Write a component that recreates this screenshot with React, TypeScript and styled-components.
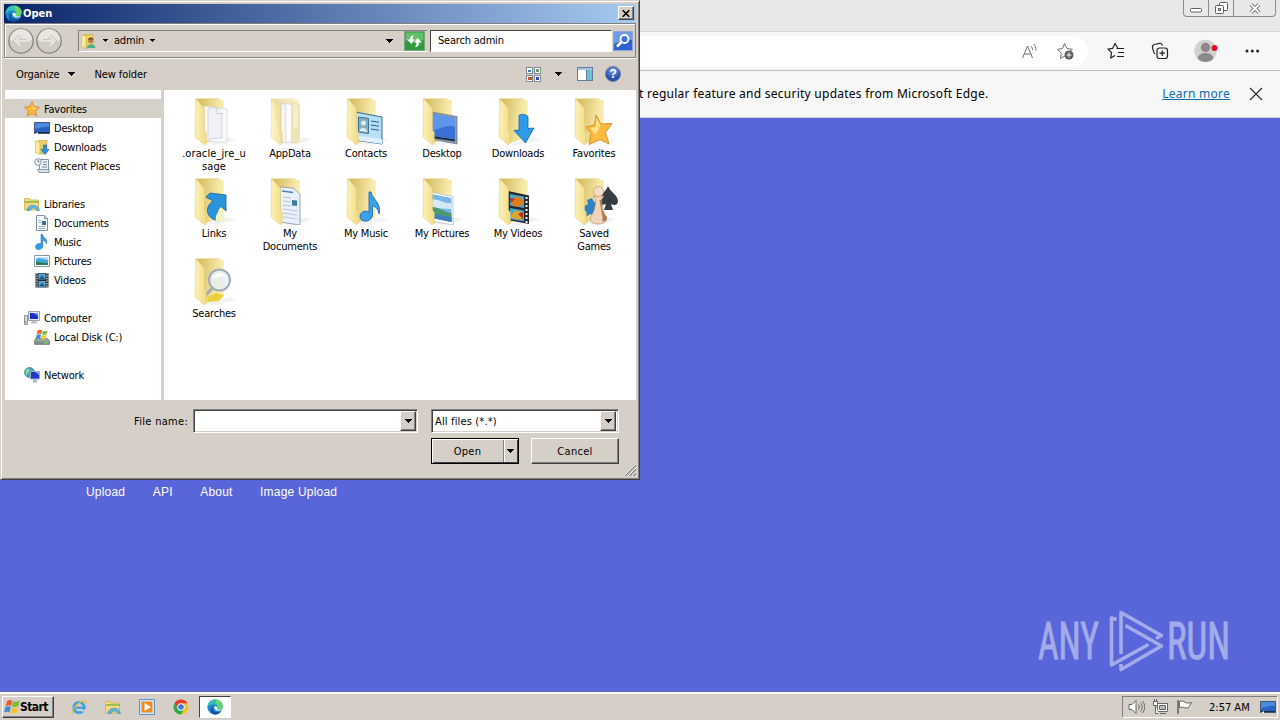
import type { ReactNode } from 'react';
import styled, { createGlobalStyle } from 'styled-components';

const GlobalStyle = createGlobalStyle`
  * {
    box-sizing: border-box;
  }

  body {
    margin: 0;
    overflow: hidden;
    font-family: 'DejaVu Sans Condensed', 'DejaVu Sans', sans-serif;
    font-stretch: condensed;
    font-size: 11px;
    letter-spacing: -0.2px;
    color: #000;
  }

  svg {
    display: block;
    flex: none;
  }
`;

/* ---------- desktop and browser ---------- */

const Screen = styled.div`
  position: relative;
  display: flex;
  flex-direction: column;
  width: 1280px;
  height: 720px;
  overflow: hidden;
  background: #5966da;
`;

const TabStrip = styled.div`
  display: flex;
  justify-content: flex-end;
  height: 32px;
  padding-right: 4px;
  background: #e8e8e8;
  border-bottom: 1px solid #d6d6d6;
`;

const WindowButtons = styled.div`
  display: flex;
  height: 17px;
  border: 1px solid #8c8c8c;
  border-top: 0;
  border-radius: 0 0 4px 4px;
`;

const WindowButton = styled.div<{ $width: number }>`
  display: flex;
  align-items: center;
  justify-content: center;
  width: ${({ $width }) => $width}px;

  & + & {
    border-left: 1px solid #8c8c8c;
  }
`;

const BrowserBar = styled.div`
  display: flex;
  align-items: center;
  height: 39px;
  padding-right: 20px;
  background: #f7f7f7;
  border-bottom: 1px solid #bdbdbd;
`;

const Omnibox = styled.div`
  display: flex;
  align-items: center;
  justify-content: flex-end;
  gap: 18px;
  width: 1088px;
  height: 31px;
  padding-right: 14px;
  background: #fff;
  border-radius: 16px;
`;

const BrowserActions = styled.div`
  display: flex;
  flex: 1;
  align-items: center;
  justify-content: space-between;
  padding-left: 19px;
`;

const InfoBar = styled.div`
  display: flex;
  align-items: center;
  height: 47px;
  padding: 0 16px 0 639px;
  background: #f7f7f7;
  border-bottom: 1px solid #cfd0dc;
  font-family: 'Noto Sans', sans-serif;
  font-stretch: normal;
  font-size: 12px;
  letter-spacing: 0.25px;
`;

const InfoText = styled.span`
  flex: 1;
  padding-bottom: 2px;
  white-space: nowrap;
`;

const LearnMore = styled.span`
  margin-right: 18px;
  padding-bottom: 2px;
  color: #0f6cb4;
  text-decoration: underline;
`;

const WebPage = styled.div`
  display: flex;
  flex: 1;
  flex-direction: column;
  justify-content: space-between;
  padding: 366px 48px 21px 86px;
`;

const PageNav = styled.nav`
  display: flex;
  gap: 27.500px;
  color: #fff;
  font: 12px/16px 'Liberation Sans', sans-serif;
  letter-spacing: 0.2px;
`;

const Watermark = styled.svg`
  align-self: flex-end;
  overflow: visible;
`;

/* ---------- taskbar ---------- */

const Taskbar = styled.div`
  display: flex;
  align-items: center;
  height: 28px;
  padding: 0 2px;
  background: #d5cfc7;
  border-top: 2px solid #f8f6f3;
`;

const StartButton = styled.div`
  display: flex;
  align-items: center;
  width: 52px;
  height: 22px;
  padding-left: 1px;
  background: #d5cfc7;
  border: 1px solid;
  border-color: #fff #404040 #404040 #fff;
  box-shadow: inset -1px -1px #808080;
  font-size: 12px;
  font-weight: bold;
  letter-spacing: -0.6px;
`;

const QuickLaunch = styled.div`
  display: flex;
  flex: 1;
  align-items: center;
  gap: 18px;
  padding-left: 17px;
`;

const ActiveTask = styled.div`
  display: flex;
  align-items: center;
  justify-content: center;
  width: 32px;
  height: 22px;
  margin-left: -8px;
  background: #fff;
  border: 1px solid;
  border-color: #404040 #fff #fff #404040;
`;

const Tray = styled.div`
  display: flex;
  align-items: center;
  gap: 7px;
  width: 156px;
  height: 22px;
  padding: 0 1px 0 5px;
  border: 1px solid;
  border-color: #808080 #fff #fff #808080;
`;

const Clock = styled.span`
  flex: 1;
  padding-left: 9px;
  white-space: nowrap;
  letter-spacing: 0;
`;

/* ---------- file dialog ---------- */

const Dialog = styled.div`
  position: absolute;
  top: 0;
  left: 0;
  display: flex;
  flex-direction: column;
  width: 640px;
  height: 480px;
  padding: 2px;
  background: #d5cfc7;
  border: 1px solid;
  border-color: #d5cfc7 #404040 #404040 #d5cfc7;
  box-shadow: inset 1px 1px #fff, inset -1px -1px #808080;
`;

const TitleBar = styled.div`
  display: flex;
  align-items: center;
  height: 19px;
  margin: 1px 1px 0;
  padding: 0 2px 0 1px;
  background: linear-gradient(90deg, #0a246a, #a6caf0);
  color: #fff;
  font-weight: bold;
  letter-spacing: 0;
`;

const TitleText = styled.span`
  flex: 1;
  padding-left: 1px;
`;

const CloseButton = styled.div`
  display: flex;
  align-items: center;
  justify-content: center;
  width: 16px;
  height: 14px;
  margin-bottom: 1px;
  background: #d5cfc7;
  border: 1px solid;
  border-color: #fff #404040 #404040 #fff;
  box-shadow: inset -1px -1px #808080;
`;

const Rebar = styled.div`
  display: flex;
  align-items: center;
  height: 35px;
  margin: 0 1px;
  padding-left: 2px;
  border: 1px solid #808080;
  box-shadow: inset 1px 1px #fff, 0 1px #fff;
`;

const AddressBar = styled.div`
  display: flex;
  align-items: center;
  width: 350px;
  height: 22px;
  margin-left: 15px;
  padding: 0 2px 0 1px;
  border: 1px solid;
  border-color: #808080 #d5cfc7 #fff #808080;
`;

const Crumb = styled.span`
  margin: 0 6px;
`;

const Spacer = styled.div<{ $width?: number }>`
  flex: ${({ $width }) => ($width ? `0 0 ${$width}px` : '1')};
`;

const SearchBox = styled.div`
  display: flex;
  align-items: center;
  width: 182px;
  height: 22px;
  margin: 0 1px 0 2px;
  padding-left: 7px;
  background: #fff;
  border: 1px solid #404040;
  border-right-color: #fff;
  border-bottom-color: #fff;
`;

const CommandBar = styled.div`
  display: flex;
  align-items: center;
  height: 32px;
  padding: 0 16px 0 13px;
`;

const Command = styled.span`
  margin-right: 8px;
  letter-spacing: -0.1px;
`;

const Body = styled.div`
  display: flex;
  height: 310px;
  margin: 0 1px 0 2px;
`;

const NavPane = styled.div`
  display: flex;
  flex-direction: column;
  gap: 19px;
  width: 156px;
  padding-top: 9px;
  background: #fff;
`;

const NavRow = styled.div<{ $child?: boolean; $selected?: boolean }>`
  display: flex;
  align-items: center;
  gap: 4px;
  height: 19px;
  padding-left: ${({ $child }) => ($child ? 29 : 19)}px;
  background: ${({ $selected }) => ($selected ? '#d5d0c8' : 'transparent')};
  white-space: nowrap;
`;

const NavLabel = styled.span`
  padding-top: 2px;
`;

const FileArea = styled.div`
  display: grid;
  flex: 1;
  grid-template-columns: repeat(6, 76px);
  grid-auto-rows: 80px;
  align-content: start;
  margin-left: 3px;
  padding: 7px 0 0 12px;
  background: #fff;
`;

const FileItem = styled.div`
  display: flex;
  flex-direction: column;
  align-items: center;
  line-height: 13px;
  text-align: center;
  white-space: pre-line;
`;

const FileLabel = styled.span<{ $loose?: boolean }>`
  margin-top: 2px;
  letter-spacing: ${({ $loose }) => ($loose ? '0.1px' : 'inherit')};
`;

const Footer = styled.div`
  display: flex;
  flex: 1;
  flex-direction: column;
  gap: 5px;
  padding: 9px 18px 0 130px;
`;

const FooterRow = styled.div`
  display: flex;
  align-items: center;
  justify-content: flex-end;
`;

const FieldLabel = styled.span`
  flex: 1;
  padding-left: 1px;
  white-space: nowrap;
  letter-spacing: 0.3px;
`;

const Combo = styled.div<{ $width: number }>`
  display: flex;
  align-items: center;
  justify-content: space-between;
  width: ${({ $width }) => $width}px;
  height: 24px;
  padding: 1px 1px 1px 3px;
  background: #fff;
  border: 1px solid;
  border-color: #808080 #fff #fff #808080;
  box-shadow: inset 1px 1px #404040, inset -1px -1px #d5cfc7;
  letter-spacing: 0.15px;

  & + & {
    margin-left: 13px;
    padding-right: 2px;
  }
`;

const ComboArrow = styled.div`
  display: flex;
  align-items: center;
  justify-content: center;
  width: 16px;
  height: 20px;
  background: #d5cfc7;
  border: 1px solid;
  border-color: #fff #404040 #404040 #fff;
  box-shadow: inset -1px -1px #808080;
`;

const Button = styled.div<{ $primary?: boolean }>`
  display: flex;
  align-items: center;
  width: 88px;
  height: 26px;
  border: 1px solid;
  border-color: ${({ $primary }) => ($primary ? '#000' : '#fff #404040 #404040 #fff')};
  box-shadow: ${({ $primary }) =>
    $primary ? 'inset 1px 1px #fff, inset -1px -1px #404040' : 'inset -1px -1px #808080'};
  letter-spacing: 0.3px;

  & + & {
    margin-left: 12px;
  }
`;

const ButtonText = styled.span`
  flex: 1;
  text-align: center;
`;

const SplitArrow = styled.div`
  display: flex;
  align-items: center;
  justify-content: center;
  width: 14px;
  height: 22px;
  margin-right: 1px;
  border-left: 1px solid #808080;
  box-shadow: inset 1px 0 #fff;
`;

const Grip = styled.svg`
  position: absolute;
  right: 3px;
  bottom: 3px;
`;

/* ---------- small icons ---------- */

interface IconProps {
  size?: number;
  children: ReactNode;
}

const Icon = ({ size = 16, children }: IconProps) => (
  <svg width={size} height={size} viewBox="0 0 16 16" fill="none">
    {children}
  </svg>
);

const Arrow = () => (
  <svg width="7" height="4" viewBox="0 0 7 4" shapeRendering="crispEdges">
    <path d="M0 0h7v1H0zM1 1h5v1H1zM2 2h3v1H2zM3 3h1v1H3z" fill="#000" />
  </svg>
);

const CrumbArrow = () => (
  <svg width="5" height="3" viewBox="0 0 5 3" shapeRendering="crispEdges">
    <path d="M0 0h5v1H0zM1 1h3v1H1zM2 2h1v1H2z" fill="#000" />
  </svg>
);

const EdgeIcon = ({ size = 16 }: { size?: number }) => (
  <Icon size={size}>
    <circle cx="8" cy="8" r="7.6" fill="#1c86d1" />
    <path d="M.5 8C.8 3.500 4 .4 8 .4c4.500 0 7.600 3.200 7.600 6.500 0 2.500-1.900 4-4 4-1.800 0-2.300-.8-1.700-1.500 1.200-1.600 0-4.200-3.100-4.200C4 5.200 1.300 6.600.5 8z" fill="#35c1b4" />
    <path d="M9 .5c4 .3 6.600 3.200 6.600 6.400 0 2.500-1.900 4-4 4-1.800 0-2.300-.8-1.700-1.500C11.500 6 8 3.600 9 .5z" fill="#66d66a" />
    <path d="M5.600 9.200c-.3 3.400 3.500 5.400 8.200 3.300C12 15 9.800 15.700 7.500 15.600 3 15 2.500 9 6.600 6.800 5.900 7.500 5.600 8.300 5.600 9.200z" fill="#124f9c" />
    <path d="M7.300 7.200c-.6 3 1.700 5 6.600 4.400l1.300-1.500c-1 .8-4.700 1.400-5.400 0 .8-1.300.4-3-2.500-2.900z" fill="#fff" />
  </Icon>
);

const FlagIcon = () => (
  <Icon>
    <path d="M3 2.200C5 .6 6.500.7 8.300 1.800L7.100 7C5.300 6 3.600 6.200 1.600 7.300z" fill="#f0592a" />
    <path d="M9.100 2.200c2 1 4 .9 6.700-.4l-1.400 5.300c-2.200 1.200-4.300 1.300-6.500.3z" fill="#7fba35" />
    <path d="M1.300 8.200c2-1.200 3.700-1.200 5.500-.2l-1.300 5.300C3.700 12.300 2 12.500 0 13.500z" fill="#3b8ede" />
    <path d="M7.600 8.400c2 1 4.200.9 6.500-.2l-1.400 5.400c-2.200 1.200-4.200 1.200-6.400.1z" fill="#fbc02d" />
  </Icon>
);

const StarIcon = () => (
  <Icon>
    <path d="M8 .7l2.200 4.800 5.300.7-3.900 3.600 1 5.400L8 12.600l-4.700 2.600 1-5.400L.5 6.200l5.300-.7z" fill="#fdb83c" stroke="#d9822a" strokeWidth=".8" />
    <path d="M8 2.500l1.400 4 3.600.5-4 1.500z" fill="#ffe08a" />
  </Icon>
);

const MonitorIcon = () => (
  <Icon>
    <path d="M.5 2.500h15v11H.5z" fill="#2a62c0" stroke="#41586f" />
    <path d="M1 3h14v4C9 6 5 9 1 9z" fill="#4b8ae0" />
    <path d="M1 12.500h14" stroke="#1a2b4a" />
    <path d="M1 14l3-2v2z" fill="#fff" />
  </Icon>
);

const SmallFolder = () => (
  <>
    <path d="M4 1.500h9v12l-6 2z" fill="#e8cf6c" stroke="#c9a63c" strokeWidth=".6" />
    <path d="M1.500 1.500L6 3.500v12l-4.500-2z" fill="#fbeb9b" stroke="#d4b44c" strokeWidth=".6" />
  </>
);

const DownloadsIcon = () => (
  <Icon>
    <SmallFolder />
    <path d="M9.500 6h3v4.500H15l-4 5-4-5h2.500z" fill="#2b94e3" stroke="#155fa5" strokeWidth=".6" />
  </Icon>
);

const UserFolderIcon = () => (
  <Icon>
    <SmallFolder />
    <path d="M7 15c0-5 8-5 8.500 0z" fill="#4fae8e" />
    <circle cx="10.800" cy="7.500" r="2.600" fill="#b9794b" />
    <path d="M8.200 7c0-3.500 5-3.500 5.200 0-1.500-1-3.500-1-5.200 0z" fill="#6b3d1e" />
  </Icon>
);

const RecentIcon = () => (
  <Icon>
    <path d="M5.500 1.500h9v10h-9z" fill="#eef4f8" stroke="#8296a5" />
    <path d="M3.500 11.500h11.500v3H5z" fill="#dbe5ec" stroke="#8296a5" />
    <path d="M9 4h4M9 6.500h4M8 9h5" stroke="#6e8698" />
    <circle cx="4" cy="4" r="3.300" fill="#f3f6f8" stroke="#8296a5" />
    <path d="M4 2v2h1.500" stroke="#4a5e6e" strokeWidth=".8" />
  </Icon>
);

const LibraryIcon = () => (
  <Icon>
    <path d="M.5 2.500h5l1 1.500h8v10H.5z" fill="#f3dc83" stroke="#cfae4b" strokeWidth=".8" />
    <path d="M1 6h14" stroke="#7fb842" strokeWidth="1.500" />
    <path d="M3 14.500c0-6 11-8 12.500 0h-2.800c-1-3.500-5.500-3.500-6.500 0z" fill="#5fb8dd" stroke="#3b8db8" strokeWidth=".6" />
  </Icon>
);

const DocumentIcon = () => (
  <Icon>
    <path d="M2.500.5h8l3 3v12h-11z" fill="#fff" stroke="#7d93aa" />
    <path d="M10.500.5v3h3" fill="#d7e3ef" stroke="#7d93aa" />
    <path d="M4.500 5.500h3M4.500 7.500h3M4.500 11.500h7M4.500 13.500h7" stroke="#9aaec2" />
    <path d="M8 6h4v4H8z" fill="#3b6ea8" />
  </Icon>
);

const MusicIcon = () => (
  <Icon>
    <path d="M7 .5h1.500c.5 3.500 6 4.500 3.800 9.500-.3-2.500-2-3.500-3.500-3.700v6.200c-.8 4-7.300 4-7.300.4 0-2.900 3-3.900 5.500-2.900z" fill="#2fa0e8" stroke="#1668a8" strokeWidth=".5" />
  </Icon>
);

const PictureIcon = () => (
  <Icon>
    <path d="M.5 2.500h15v11H.5z" fill="#fff" stroke="#8a97a3" />
    <path d="M2 4h12v8H2z" fill="#3fa9e0" />
    <path d="M2 6c4-2 8 0 12 1v-3H2z" fill="#b6e3f7" />
    <path d="M2 12V9c3-1 5 1 12 1v2z" fill="#2b7d5d" />
  </Icon>
);

const VideoIcon = () => (
  <Icon>
    <path d="M1.500 1h13v14.500h-13z" fill="#252b33" />
    <path d="M4.500 1.500h7v6h-7zM4.500 9h7v6h-7z" fill="#4fa9d3" />
    <path d="M5 7l3-4 3 4zM5 14.500l3-4 3 4z" fill="#1b5b8a" />
    <path d="M3 1v14.500M13 1v14.500" stroke="#e6e8ea" strokeWidth="1.300" strokeDasharray="1.300 1.200" />
  </Icon>
);

const ComputerIcon = () => (
  <Icon>
    <path d="M4.500 1.500h11v9h-11z" fill="#dfe5ec" stroke="#9aa5b3" />
    <path d="M6 3h8v6H6z" fill="#1b2fc4" />
    <path d="M9 3h5v3z" fill="#6d8af0" />
    <path d="M8 11h4l1.500 2.500h-7z" fill="#bcc5cf" />
    <path d="M.5 5.500h3v9h-3z" fill="#d9e0d2" stroke="#8b979f" />
    <path d="M1.500 11v2" stroke="#5eb83a" />
  </Icon>
);

const DiskIcon = () => (
  <Icon>
    <path d="M1.500 9.500h12l2 2.500v3.500H.5V12z" fill="#9aa6a0" stroke="#6c7972" strokeWidth=".7" />
    <path d="M1 12.500h14v2.500H1z" fill="#7f8f85" />
    <path d="M10 13.700h4" stroke="#6de04c" />
    <path d="M3.500 1.500c1.500-1 3-1 4.500 0L7.300 5c-1.500-.8-3-.7-4.500.2z" fill="#ee5a2b" />
    <path d="M8.700 1.800c1.500.8 3 .7 4.800-.3L12.700 5c-1.500 1-3 1-4.700.2z" fill="#7cbc3a" />
    <path d="M2.600 6c1.600-1 3-1 4.500-.2L6.300 9.500c-1.500-.8-3-.8-4.500.1z" fill="#3f8fdd" />
    <path d="M7.800 6c1.600.8 3 .8 4.700-.2l-.8 3.600c-1.600 1-3.200 1-4.700.2z" fill="#fbc531" />
  </Icon>
);

const NetworkIcon = () => (
  <Icon>
    <circle cx="5.500" cy="5.500" r="5" fill="#43a6c9" stroke="#27708f" strokeWidth=".6" />
    <path d="M3 2c3-1 3 1 2 2.500S3 6 2.500 8 .8 5 3 2z" fill="#8fdf9d" />
    <path d="M6.500 4.500h9v7.500h-9z" fill="#2136c8" stroke="#a4aebd" />
    <path d="M11 5h4v3z" fill="#7e98f2" />
    <path d="M9.500 12.500h3l1 3h-5z" fill="#a9b3bf" />
  </Icon>
);

const IeIcon = () => (
  <Icon>
    <circle cx="8" cy="8.500" r="5.200" stroke="#36a6e6" strokeWidth="2.800" />
    <path d="M3 8.700h11.500" stroke="#36a6e6" strokeWidth="2.200" />
    <path d="M9.500 10.500h6.500v2h-5.500z" fill="#d5cfc7" />
    <path d="M1.500 14.800c-3-3 8-14.300 13-12.800 1 .5.800 1.500.3 2.500" stroke="#efb93a" strokeWidth="1.300" />
  </Icon>
);

const WmpIcon = () => (
  <Icon>
    <path d="M.5.5h15v15H.5z" fill="#cfe6f8" stroke="#5d93c4" />
    <path d="M2.500 2.500h11v11h-11z" fill="#f28a1e" />
    <path d="M5.500 4v8L12 8z" fill="#fff" />
  </Icon>
);

const ChromeIcon = () => (
  <Icon>
    <circle cx="8" cy="8" r="7.500" fill="#fbc116" />
    <path d="M1.500 4.250A7.500 7.500 0 0 1 14.500 4.250L8 4.400 4.800 9.800z" fill="#e33b2e" />
    <path d="M1.500 4.250A7.500 7.500 0 0 0 8 15.500l3.200-5.600L4.800 9.800z" fill="#2da94f" />
    <circle cx="8" cy="8" r="3.700" fill="#fff" />
    <circle cx="8" cy="8" r="2.800" fill="#3b79e8" />
  </Icon>
);

const RoundButton = ({ back }: { back?: boolean }) => (
  <svg width="28" height="28" viewBox="0 0 28 28" fill="none">
    <circle cx="14" cy="14" r="12.200" fill="#cfcbc5" stroke="#85827d" strokeWidth="1.200" />
    <path d="M3 13a11 11 0 0 1 22 0c-6 3-16 3-22 0z" fill="#e9e6e2" />
    <g transform={back ? undefined : 'matrix(-1 0 0 1 28 0)'}>
      <path d="M20 14H9M13.500 9L8.500 14l5 5" stroke="#c2beb8" strokeWidth="4" />
      <path d="M20 14H9M13.500 9L8.500 14l5 5" stroke="#e6e3df" strokeWidth="2.600" />
    </g>
  </svg>
);

const RefreshIcon = () => (
  <svg width="21" height="20" viewBox="0 0 21 20" fill="none">
    <path d="M.5.5h20v19H.5z" fill="#2f9e3a" stroke="#7fa183" />
    <path d="M1.500 1.500h18V9c-6 2-12 2-18 0z" fill="#63c069" />
    <path d="M10 4.500c-3 0-4 1.500-4 4H3l4.500 4.500L11 8.500H8.700c0-1.500.3-2.500 1.300-4z" fill="#fff" />
    <path d="M11 16c3 0 4-1.500 4-4.500h3L13.500 7 10 11.500h2.300c0 1.500-.3 3-1.300 4.500z" fill="#fff" />
  </svg>
);

const SearchIcon = () => (
  <svg width="20" height="20" viewBox="0 0 20 20" fill="none">
    <path d="M.5.5h19v19H.5z" fill="#2f62d0" stroke="#8ea6d8" />
    <path d="M1 1h18v8C12 8 6 11 1 13z" fill="#6e9bea" />
    <circle cx="11.500" cy="8" r="4" fill="#3a74dc" stroke="#fff" strokeWidth="1.800" />
    <path d="M8.500 11L4 15.500" stroke="#fff" strokeWidth="2.600" />
  </svg>
);

const ViewsIcon = () => (
  <svg width="15" height="15" viewBox="0 0 15 15" fill="none" shapeRendering="crispEdges">
    <path d="M.5.5h6v6h-6zM8.500.5h6v6h-6zM.5 8.500h6v6h-6zM8.500 8.500h6v6h-6z" fill="#fff" stroke="#7f8b97" />
    <path d="M2 3h3v2H2z" fill="#3e7fa8" />
    <path d="M10 2h3v3h-3z" fill="#69a35e" />
    <path d="M2 10h4v3H2z" fill="#c3551f" />
    <path d="M10 10h3v3h-3z" fill="#2e4ea5" />
  </svg>
);

const PreviewIcon = () => (
  <svg width="16" height="14" viewBox="0 0 16 14" shapeRendering="crispEdges">
    <path d="M.5.5h15v13H.5z" fill="#fff" stroke="#5e7c9b" />
    <path d="M1 1h14v2H1z" fill="#aac4dd" />
    <path d="M10 3h5v10h-5z" fill="#6cc0d8" />
    <path d="M9.500 3v10" stroke="#5e7c9b" />
  </svg>
);

const HelpBadge = styled.div`
  display: flex;
  align-items: center;
  justify-content: center;
  width: 16px;
  height: 16px;
  background: radial-gradient(circle at 50% 25%, #7e9fe0, #2b4fae 65%);
  border: 1px solid #6377a5;
  border-radius: 50%;
  color: #fff;
  font: bold 12px/14px 'Liberation Sans', sans-serif;
`;

/* ---------- folder icons ---------- */

const Folder = ({ pale, children }: { pale?: boolean; children?: ReactNode }) => (
  <svg width="48" height="48" viewBox="0 0 48 48" fill="none">
    <defs>
      <linearGradient id="flap" x1="0" y1="0" x2="1" y2="0.100">
        <stop offset="0" stopColor="#fdf4ba" />
        <stop offset="1" stopColor="#f1dc88" />
      </linearGradient>
      <linearGradient id="back" x1="0" y1="0" x2="1" y2="0.200">
        <stop offset="0.200" stopColor="#d9c068" />
        <stop offset="1" stopColor="#fbf0b4" />
      </linearGradient>
    </defs>
    <path d="M15 47l24-7 7 3-20 5z" fill="#000" opacity=".05" />
    <g opacity={pale ? 0.55 : 1}>
      <path d="M5.500 1.800L28.500 1.500l1 1.500 3.500.5V40l-18 6z" fill="url(#back)" stroke="#e6d389" strokeWidth=".5" />
    </g>
    {children}
    <path
      d="M5.500 1.800L14.500 11v22l1.800 2.500V46l-1.800 2L5 40z"
      fill="url(#flap)"
      stroke="#dfc874"
      strokeWidth=".5"
      opacity={pale ? 0.75 : 1}
    />
  </svg>
);

interface FileEntry {
  name: string;
  pale?: boolean;
  loose?: boolean;
  art: ReactNode;
}

const files: FileEntry[] = [
  {
    name: '.oracle_jre_u\nsage',
    loose: true,
    art: (
      <>
        <path d="M14 9l23 3v34l-23-3z" fill="#fafafa" stroke="#cfd1d4" strokeWidth=".7" />
        <path d="M18 11h9l5 5v25l-14 1z" fill="#f0f1f4" stroke="#c5c7cc" strokeWidth=".7" />
        <path d="M27 11v5.500h5" fill="#fff" stroke="#b9bcc2" strokeWidth=".7" />
      </>
    ),
  },
  {
    name: 'AppData',
    pale: true,
    art: (
      <>
        <path d="M15 6l6 2v36l-6 2z" fill="#f4f4f2" stroke="#d2cfc2" strokeWidth=".7" />
        <path d="M20 6l6 2v36l-6 2z" fill="#fff" stroke="#cfcfcf" strokeWidth=".7" />
        <path d="M26 5l7 3v37l-7 1z" fill="#f7edc8" stroke="#d9cb95" strokeWidth=".7" />
        <path d="M24 33l10-4v15l-4 3z" fill="#efe3b4" />
      </>
    ),
  },
  {
    name: 'Contacts',
    art: (
      <>
        <path d="M13 15l27 5v27l-27-4z" fill="#b8def5" stroke="#326d9b" />
        <path d="M13 38l27 4v5l-27-4z" fill="#dbf0fb" />
        <path d="M16.500 20l10 1.500v15l-10-1.500z" fill="#7db0b9" stroke="#3f7295" />
        <circle cx="21.500" cy="26" r="2.500" fill="#dcecf5" />
        <path d="M17.500 34c1-5 7-4 8 1z" fill="#dcecf5" />
        <path d="M29 24l8 1.200M29 28l8 1.200M29 32l8 1.200" stroke="#29628f" />
      </>
    ),
  },
  {
    name: 'Desktop',
    art: (
      <>
        <path d="M13 15l26 4.500V47l-26-5z" fill="#8ea0b4" stroke="#5c6d80" strokeWidth=".7" />
        <path d="M14 17l23 4v21.500L14 39z" fill="#3a71d6" />
        <path d="M14 17l23 4v8.500C28 27 20 33 14 33z" fill="#5f95ea" />
        <path d="M14 39l23 3.500v2L14 41z" fill="#1c2c46" />
      </>
    ),
  },
  {
    name: 'Downloads',
    art: (
      <path d="M25 18.500c3-2 6-1.500 9 1v12l6-.5L31.500 46 20 33.500l5-.5z" fill="#2e9be8" stroke="#1765ab" strokeWidth=".8" />
    ),
  },
  {
    name: 'Favorites',
    art: (
      <>
        <path d="M26 18l5 9 11-.5-6.500 9L39 47l-9-4.500-11 5 2-11L16 30l8.500-2z" fill="#fcbb3f" stroke="#d48b22" strokeWidth=".9" />
        <path d="M26.500 21l4 7.500-5 9.500-5-7 5-1z" fill="#ffe08c" />
      </>
    ),
  },
  {
    name: 'Links',
    art: (
      <>
        <path d="M16 20l4-4 16 2v16l-5-4.500c-4 3-5 8-2 14.500-13-2-15-14-6-20z" fill="#2a94da" stroke="#10609f" strokeWidth=".8" />
        <path d="M26 44c-1-5 1-8 4-11l4.500 5v6z" fill="#eef2c6" />
      </>
    ),
  },
  {
    name: 'My\nDocuments',
    art: (
      <>
        <path d="M14 10l13 1 7 6v31l-20-3z" fill="#eaf0f9" stroke="#8592ab" strokeWidth=".8" />
        <path d="M16 14l11 1.500" stroke="#4c83b8" strokeWidth="1.500" />
        <path d="M17 20l8 1M17 24l8 1M17 28l8 1M17 32l14 2M17 36l14 2M17 40l14 2" stroke="#b3bfd2" strokeWidth=".9" />
        <path d="M26 23l5 .6v5.500l-5-.6z" fill="#3b7ea0" />
      </>
    ),
  },
  {
    name: 'My Music',
    art: (
      <path d="M27 15h2c1 7 11 11 8 22-.6-5-4-8-6.500-8v9c-1 8-12.500 8-12.500 1.500 0-4.500 5-6.500 9-4.500z" fill="#3ba1ee" stroke="#1666ae" strokeWidth=".9" />
    ),
  },
  {
    name: 'My Pictures',
    art: (
      <>
        <path d="M13 15l22 4.500V48l-22-4z" fill="#fff" stroke="#a5b1bb" strokeWidth=".7" />
        <path d="M14 17l19.500 4v24L14 41z" fill="#76b7e6" />
        <path d="M14 23c5-2 12 4 19.500 3v6L14 31z" fill="#d3eaf6" />
        <path d="M14 30c7 0 13 5 19.500 6v9L14 41z" fill="#4c9a72" />
        <path d="M14 37c6 0 13 3 19.500 3v5L14 41z" fill="#3f7ec0" />
      </>
    ),
  },
  {
    name: 'My Videos',
    art: (
      <>
        <path d="M14 14l21 4.500V47l-21-4z" fill="#22282e" />
        <path d="M16 17l14 2.500v11.500l-14-2.500zM16 31l14 2.500v11L16 42z" fill="#47a6cf" />
        <path d="M17 27c1-7 6-9 9-6 3 0 4 4 2 7s-8 2-11-1z" fill="#e07c1f" />
        <path d="M17 41c1-7 5-9 9-6 4 1 3 6 1 8z" fill="#dfa52a" />
        <path d="M16 21l5 1-4 4zM24 37l5-2v7z" fill="#b3302b" />
        <path d="M32.500 20v26" stroke="#f2f4f5" strokeWidth="2" strokeDasharray="2 2" />
      </>
    ),
  },
  {
    name: 'Saved\nGames',
    art: (
      <>
        <path d="M13 30l5-3-1-4 5-2 2 4 4-1v14l-4 2-3-3-8 4z" fill="#3181c5" />
        <path d="M38 9c2 6 10 9 10 15 0 4-4 5-7 3l2 6h-9l2-6c-4 2-7 0-7-3 0-6 7-9 9-15z" fill="#353c42" />
        <path d="M23 19h11l-2.500 3.500c0 7 2 13 5 17.500v4c-4 4-13 4-16 0v-4c4-5 5-11 5-17.500z" fill="#f0d3b8" stroke="#b98e6b" strokeWidth=".7" />
        <circle cx="28.500" cy="14.500" r="5" fill="#f5dcc4" stroke="#c29a79" strokeWidth=".7" />
        <path d="M29.500 23l3 17v5l4-2v-3c-4-4-5-9-5-17z" fill="#a87954" />
      </>
    ),
  },
  {
    name: 'Searches',
    art: (
      <>
        <path d="M18 40l8-4 8 2-5 6-11 1z" fill="#e9cf3e" />
        <path d="M22.500 31L13 41" stroke="#a5a9ad" strokeWidth="3" />
        <circle cx="29.500" cy="23" r="10.500" fill="#e6eff2" fillOpacity=".85" stroke="#a1adb5" strokeWidth="2" />
        <path d="M22 22c2-6 9-8 14-3-4 0-9 1-14 3z" fill="#fff" />
      </>
    ),
  },
];

interface NavEntry {
  label: string;
  icon: ReactNode;
}

const navGroups: NavEntry[][] = [
  [
    { label: 'Favorites', icon: <StarIcon /> },
    { label: 'Desktop', icon: <MonitorIcon /> },
    { label: 'Downloads', icon: <DownloadsIcon /> },
    { label: 'Recent Places', icon: <RecentIcon /> },
  ],
  [
    { label: 'Libraries', icon: <LibraryIcon /> },
    { label: 'Documents', icon: <DocumentIcon /> },
    { label: 'Music', icon: <MusicIcon /> },
    { label: 'Pictures', icon: <PictureIcon /> },
    { label: 'Videos', icon: <VideoIcon /> },
  ],
  [
    { label: 'Computer', icon: <ComputerIcon /> },
    { label: 'Local Disk (C:)', icon: <DiskIcon /> },
  ],
  [{ label: 'Network', icon: <NetworkIcon /> }],
];

const OpenDialog = () => (
  <Dialog>
    <TitleBar>
      <EdgeIcon size={17} />
      <TitleText>Open</TitleText>
      <CloseButton>
        <svg width="8" height="7" viewBox="0 0 8 7">
          <path d="M.7.300l6.600 6.400M7.300.300L.7 6.700" stroke="#000" strokeWidth="1.600" />
        </svg>
      </CloseButton>
    </TitleBar>
    <Rebar>
      <RoundButton back />
      <RoundButton />
      <AddressBar>
        <UserFolderIcon />
        <Spacer $width={7} />
        <CrumbArrow />
        <Crumb>admin</Crumb>
        <CrumbArrow />
        <Spacer />
        <Arrow />
        <Spacer $width={11} />
        <RefreshIcon />
      </AddressBar>
      <SearchBox>Search admin</SearchBox>
      <SearchIcon />
    </Rebar>
    <CommandBar>
      <Command>Organize</Command>
      <Arrow />
      <Spacer $width={20} />
      <Command>New folder</Command>
      <Spacer />
      <ViewsIcon />
      <Spacer $width={14} />
      <Arrow />
      <Spacer $width={15} />
      <PreviewIcon />
      <Spacer $width={12} />
      <HelpBadge>?</HelpBadge>
    </CommandBar>
    <Body>
      <NavPane>
        {navGroups.map((group, g) => (
          <div key={group[0].label}>
            {group.map((entry, i) => (
              <NavRow key={entry.label} $child={i > 0} $selected={g === 0 && i === 0}>
                {entry.icon}
                <NavLabel>{entry.label}</NavLabel>
              </NavRow>
            ))}
          </div>
        ))}
      </NavPane>
      <FileArea>
        {files.map((file) => (
          <FileItem key={file.name}>
            <Folder pale={file.pale}>{file.art}</Folder>
            <FileLabel $loose={file.loose}>{file.name}</FileLabel>
          </FileItem>
        ))}
      </FileArea>
    </Body>
    <Footer>
      <FooterRow>
        <FieldLabel>File name:</FieldLabel>
        <Combo $width={225}>
          <span />
          <ComboArrow>
            <Arrow />
          </ComboArrow>
        </Combo>
        <Combo $width={188}>
          All files (*.*)
          <ComboArrow>
            <Arrow />
          </ComboArrow>
        </Combo>
      </FooterRow>
      <FooterRow>
        <Button $primary>
          <ButtonText>Open</ButtonText>
          <SplitArrow>
            <Arrow />
          </SplitArrow>
        </Button>
        <Button>
          <ButtonText>Cancel</ButtonText>
        </Button>
      </FooterRow>
    </Footer>
    <Grip width="12" height="12" viewBox="0 0 12 12">
      <path d="M1 12L12 1M5 12l7-7M9 12l3-3" stroke="#808080" strokeWidth="1.400" />
      <path d="M0 12L12 0M4 12l8-8M8 12l4-4" stroke="#fff" strokeWidth=".7" />
    </Grip>
  </Dialog>
);

const App = () => (
  <Screen>
    <GlobalStyle />
    <TabStrip>
      <WindowButtons>
        <WindowButton $width={24}>
          <svg width="12" height="16" viewBox="0 0 12 16">
            <rect x=".5" y="8.500" width="11" height="3.500" rx="1" fill="#fff" stroke="#5f5f5f" />
          </svg>
        </WindowButton>
        <WindowButton $width={25}>
          <svg width="13" height="14" viewBox="0 0 13 14" fill="#fff" stroke="#5f5f5f">
            <rect x="4.500" y="1.500" width="8" height="8" rx="1" />
            <rect x=".5" y="4.500" width="8" height="8" rx="1" />
            <rect x="3.500" y="7.500" width="2" height="2" />
          </svg>
        </WindowButton>
        <WindowButton $width={42}>
          <svg width="12" height="11" viewBox="0 0 12 11" fill="none">
            <path d="M2 1.500l8 8M10 1.500l-8 8" stroke="#5f5f5f" strokeWidth="3.600" />
            <path d="M2 1.500l8 8M10 1.500l-8 8" stroke="#fff" strokeWidth="1.800" />
          </svg>
        </WindowButton>
      </WindowButtons>
    </TabStrip>
    <BrowserBar>
      <Omnibox>
        <svg width="17" height="17" viewBox="0 0 17 17" fill="none" stroke="#6f6f6f">
          <path d="M1.500 15L6.500 3l5 12M3.200 11h6.600" />
          <path d="M10 3c1 1 1.500 2.200 1.500 4M12.500 1c1.700 1.500 2.500 3.700 2.500 6.500" />
        </svg>
        <svg width="18" height="18" viewBox="0 0 18 18" fill="none">
          <path d="M9 14l-4.500 2.500.8-5.300L1.500 7.300l5-.8L8.500 1.500 11 6.500l5.300.8-2 2" stroke="#6f6f6f" strokeLinejoin="round" />
          <circle cx="13" cy="13" r="4.500" fill="#5f5f5f" />
          <path d="M13 10.500v5M10.500 13h5" stroke="#fff" />
        </svg>
      </Omnibox>
      <BrowserActions>
        <svg width="18" height="18" viewBox="0 0 18 18" fill="none" stroke="#222" strokeWidth="1.200">
          <path d="M11 6.500L8 1.500 5.700 6.300 1 7l3.500 3.700-.8 5.300 4.300-2.400" strokeLinejoin="round" />
          <path d="M9.500 6.500H17M11 10.500h6M10 14.500h7" />
        </svg>
        <svg width="18" height="18" viewBox="0 0 18 18" fill="none" stroke="#222" strokeWidth="1.200">
          <rect x="6" y="6" width="10.500" height="10.500" rx="2.500" />
          <path d="M11.200 8.500v5.500M8.500 11.200H14M4 12C2.500 11 2 8 1.500 5.500 1.200 3.500 2 2.800 3.500 2.500L8.500 1.300c1.700-.3 2.500.4 3 2.200" />
        </svg>
        <svg width="24" height="24" viewBox="0 0 24 24">
          <circle cx="11.500" cy="12" r="11.200" fill="#d3d1d0" />
          <circle cx="11.500" cy="8.500" r="4.700" fill="#8c8a89" />
          <ellipse cx="11.500" cy="18.500" rx="7.700" ry="4.400" fill="#8c8a89" />
          <circle cx="20.500" cy="9" r="3" fill="#dd1026" />
        </svg>
        <svg width="16" height="16" viewBox="0 0 16 16" fill="#222">
          <circle cx="3" cy="8" r="1.500" />
          <circle cx="8.300" cy="8" r="1.500" />
          <circle cx="13.600" cy="8" r="1.500" />
        </svg>
      </BrowserActions>
    </BrowserBar>
    <InfoBar>
      <InfoText>t regular feature and security updates from Microsoft Edge.</InfoText>
      <LearnMore>Learn more</LearnMore>
      <svg width="16" height="16" viewBox="0 0 16 16">
        <path d="M2 2l12 12M14 2L2 14" stroke="#333" strokeWidth="1.200" />
      </svg>
    </InfoBar>
    <WebPage>
      <PageNav>
        <span>Upload</span>
        <span>API</span>
        <span>About</span>
        <span>Image Upload</span>
      </PageNav>
      <Watermark width="194" height="64" viewBox="0 0 194 64" fill="#fff" opacity=".45">
        <g fontFamily="Roboto" fontSize="52" letterSpacing="0" stroke="#fff" strokeWidth=".8">
          <text x="0" y="52" textLength="61" lengthAdjust="spacingAndGlyphs">
            ANY
          </text>
          <text x="129" y="52" textLength="63" lengthAdjust="spacingAndGlyphs">
            RUN
          </text>
        </g>
        <g fill="none" stroke="#fff" strokeWidth="3.600" strokeLinejoin="round">
          <path d="M83 47V5.500L123.500 28.500 118 31.500" />
          <path d="M78.500 12.500l-5-1.500v47l37-20.500" />
          <path d="M87.500 18.500L123.500 39 83 62.500V57" />
        </g>
      </Watermark>
    </WebPage>
    <Taskbar>
      <StartButton>
        <FlagIcon />
        Start
      </StartButton>
      <QuickLaunch>
        <IeIcon />
        <LibraryIcon />
        <WmpIcon />
        <ChromeIcon />
        <ActiveTask>
          <EdgeIcon />
        </ActiveTask>
      </QuickLaunch>
      <Tray>
        <svg width="17" height="16" viewBox="0 0 17 16" fill="none" stroke="#666">
          <path d="M1 5.500h3l4-4v13l-4-4H1z" fill="#fff" />
          <path d="M10.500 5.500c1 1.500 1 3.500 0 5M12.500 3.500c2.200 2.700 2.200 6.300 0 9M14.500 2c3 4 3 8 0 12" />
        </svg>
        <svg width="17" height="16" viewBox="0 0 17 16" fill="#fff" stroke="#666">
          <path d="M5.500 4.500h10v8h-10zM8 14.500h6" />
          <path d="M7.500 6.500h6v4h-6z" fill="#bbb" />
          <path d="M1.500 2.500h4v4h-4zM2.500 0v2M4.500 0v2M3.500 6.500v8h3" />
        </svg>
        <svg width="17" height="16" viewBox="0 0 17 16" fill="#fff" stroke="#666">
          <path d="M2 1v14" strokeWidth="1.600" />
          <path d="M3.500 2.500c2-1 4-.5 5.500.8 2 1 4 1 6.500.2-1.500 2-2 4-3.500 5.500-3 .5-4-1.500-8.500-.5z" />
        </svg>
        <Clock>2:57 AM</Clock>
        <MonitorIcon />
      </Tray>
    </Taskbar>
    <OpenDialog />
  </Screen>
);

export default App;
